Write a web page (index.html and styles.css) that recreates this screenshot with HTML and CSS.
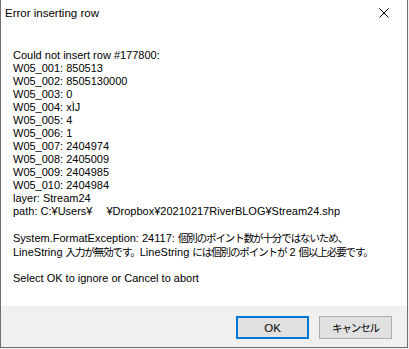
FILE: index.html
```html
<!DOCTYPE html>
<html lang="ja">
<head>
    <meta charset="UTF-8">
    <meta name="viewport" content="width=device-width, initial-scale=1.0">
    <title>Error inserting row</title>
    <link rel="stylesheet" href="styles.css">
</head>
<body>

<div class="dialog">
    <div class="titlebar">
        <span class="title">Error inserting row</span>
        <button class="close" aria-label="Close">
            <svg width="10" height="10" viewBox="0 0 10 10">
                <path d="M0.5 0.5 L9.5 9.5 M9.5 0.5 L0.5 9.5" stroke="#000" stroke-width="1" fill="none"/>
            </svg>
        </button>
    </div>
    <div class="message">
        <div>Could not insert row #177800:</div>
        <div>W05_001: 850513</div>
        <div>W05_002: 8505130000</div>
        <div>W05_003: 0</div>
        <div>W05_004: xÌJ</div>
        <div>W05_005: 4</div>
        <div>W05_006: 1</div>
        <div>W05_007: 2404974</div>
        <div>W05_008: 2405009</div>
        <div>W05_009: 2404985</div>
        <div>W05_010: 2404984</div>
        <div>layer: Stream24</div>
        <div>path: C:¥Users¥<span class="blank"></span>¥Dropbox¥20210217RiverBLOG¥Stream24.shp</div>
        <div class="gap"></div>
        <div>System.FormatException: 24117: <span class="ja">個別のポイント数が十分ではないため、</span></div>
        <div>LineString <span class="ja">入力が無効です。</span>LineString <span class="ja">には個別のポイントが</span> 2 <span class="ja">個以上必要です。</span></div>
        <div class="gap"></div>
        <div>Select OK to ignore or Cancel to abort</div>
    </div>
    <div class="buttons">
        <button class="btn default">OK</button>
        <button class="btn"><span class="ja">キャンセル</span></button>
    </div>
</div>

</body>
</html>
```

FILE: styles.css
```css
body {
    margin: 0;
    background-color: #f0f0f0;
    font-family: "Liberation Sans", Arial, "Noto Sans CJK JP", sans-serif;
    font-size: 11px;
    color: #000;
}
.dialog {
    width: 406px;
    height: 347px;
    background-color: white;
    border: 1px solid #6f6f6f;
    border-top: none;
    display: flex;
    flex-direction: column;
}
.titlebar {
    height: 30px;
    display: flex;
    align-items: center;
    justify-content: space-between;
    padding: 0 0 0 4px;
}
.title {
    font-size: 11.5px;
    margin-top: -5px;
}
.close {
    border: none;
    background: none;
    width: 46px;
    height: 30px;
    padding: 0;
    display: flex;
    align-items: center;
    justify-content: center;
    margin-top: -4px;
}
.message {
    padding: 19px 0 0 12px;
    line-height: 13px;
    flex: 1;
    white-space: nowrap;
}
.ja {
    font-family: "Noto Sans CJK JP", sans-serif;
    font-size: 10.5px;
    letter-spacing: -1.1px;
}
.gap {
    height: 13px;
}
.blank {
    display: inline-block;
    width: 14px;
}
.buttons {
    height: 41px;
    background-color: #f0f0f0;
    display: flex;
    justify-content: flex-end;
    align-items: flex-start;
    gap: 10px;
    padding: 10px 15px 0 0;
    box-sizing: border-box;
}
.btn {
    width: 73px;
    height: 23px;
    background-color: #e1e1e1;
    border: 1px solid #adadad;
    font-family: "Liberation Sans", Arial, "Noto Sans CJK JP", sans-serif;
    font-size: 11.5px;
    padding: 0;
    color: #000;
}
.btn.default {
    border: 2px solid #0078d7;
}
```
